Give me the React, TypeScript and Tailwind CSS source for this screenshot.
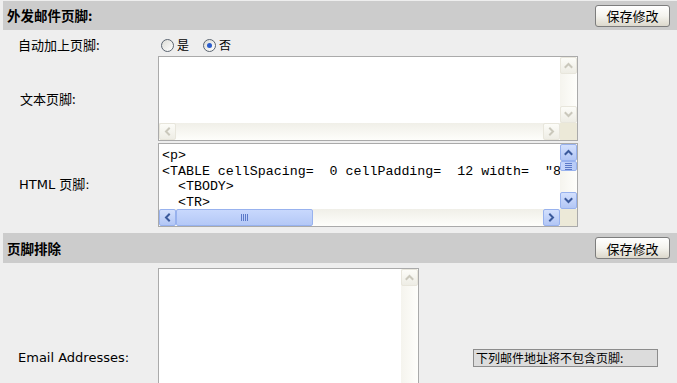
import React from "react";

type Dir = "up" | "down" | "left" | "right";

const arrowPoints: Record<Dir, string> = {
  up: "1.5,6 4.5,3 7.5,6",
  down: "1.5,3 4.5,6 7.5,3",
  left: "6,1.5 3,4.5 6,7.5",
  right: "3,1.5 6,4.5 3,7.5",
};

function Chevron({ dir, active }: { dir: Dir; active: boolean }) {
  return (
    <svg width="9" height="9" viewBox="0 0 9 9">
      <polyline
        points={arrowPoints[dir]}
        fill="none"
        stroke={active ? "#3b5a9c" : "#cac8bc"}
        strokeWidth="2"
        strokeLinecap="square"
      />
    </svg>
  );
}

function ScrollButton({ dir, active }: { dir: Dir; active: boolean }) {
  return (
    <div
      className={
        "w-[17px] h-[17px] shrink-0 flex items-center justify-center rounded-[2px] border " +
        (active
          ? "bg-gradient-to-b from-[#d3e0fd] to-[#b2c6f5] border-[#98b2ee]"
          : "bg-gradient-to-b from-[#fcfcf8] to-[#eeede5] border-[#e8e6dc]")
      }
    >
      <Chevron dir={dir} active={active} />
    </div>
  );
}

function Grip({ vertical }: { vertical: boolean }) {
  return (
    <div className={"flex gap-px " + (vertical ? "flex-col" : "flex-row")}>
      {[0, 1, 2, 3].map((i) => (
        <div
          key={i}
          className={vertical ? "w-[7px] h-px bg-[#5b79c8]" : "w-px h-[7px] bg-[#5b79c8]"}
        />
      ))}
    </div>
  );
}

function VScrollbar({ active }: { active: boolean }) {
  return (
    <div className="w-[17px] flex flex-col bg-gradient-to-r from-[#f5f4ee] to-[#fefefb]">
      <ScrollButton dir="up" active={active} />
      {active && (
        <div className="h-[10px] flex items-center justify-center rounded-[2px] border border-[#98b2ee] bg-gradient-to-r from-[#c6d6fc] to-[#b6caf6]">
          <Grip vertical />
        </div>
      )}
      <div className="flex-1" />
      <ScrollButton dir="down" active={active} />
    </div>
  );
}

function HScrollbar({ active }: { active: boolean }) {
  return (
    <div className="h-[17px] flex bg-gradient-to-b from-[#f0efe8] to-[#fefefb]">
      <ScrollButton dir="left" active={active} />
      {active && (
        <div className="w-[137px] flex items-center justify-center rounded-[2px] border border-[#98b2ee] bg-gradient-to-b from-[#c8d8fd] to-[#b4c8f6]">
          <Grip vertical={false} />
        </div>
      )}
      <div className="flex-1" />
      <ScrollButton dir="right" active={active} />
      <div className="w-[17px] bg-[#ece9d8]" />
    </div>
  );
}

function FakeTextarea({
  className,
  lines,
  hScroll = true,
  active = false,
}: {
  className: string;
  lines?: string[];
  hScroll?: boolean;
  active?: boolean;
}) {
  return (
    <div className={"shrink-0 flex flex-col border border-[#aaaaaa] bg-white " + className}>
      <div className="flex-1 flex min-h-0">
        <div className="flex-1 overflow-hidden pl-[3px] pt-[4px] font-['Liberation_Mono',monospace] text-[13.3px] leading-[15.6px] whitespace-pre">
          {lines?.map((l, i) => (
            <div key={i}>{l}</div>
          ))}
        </div>
        <VScrollbar active={active} />
      </div>
      {hScroll && <HScrollbar active={active} />}
    </div>
  );
}

function SaveButton() {
  return (
    <button className="w-[75px] h-[22px] rounded-[3px] border border-[#7d7d7d] bg-gradient-to-b from-[#ffffff] via-[#f4f3ee] to-[#dcd8cc] text-[13px] leading-none text-black">
      保存修改
    </button>
  );
}

function SectionHeader({ title, className }: { title: string; className: string }) {
  return (
    <div className={"flex items-center justify-between bg-[#cccccc] pl-1 pr-[7px] " + className}>
      <span className="font-bold text-[13.5px]">{title}</span>
      <SaveButton />
    </div>
  );
}

function Radio({ checked, label }: { checked: boolean; label: string }) {
  return (
    <label className="flex items-center gap-[3px]">
      <span className="w-[13px] h-[13px] rounded-full border border-[#5a6470] bg-gradient-to-br from-[#dcdcd6] to-white flex items-center justify-center">
        {checked && <span className="w-[5px] h-[5px] rounded-full bg-[#2a5ccc]" />}
      </span>
      <span>{label}</span>
    </label>
  );
}

const htmlLines = [
  "<p>",
  '<TABLE cellSpacing=  0 cellPadding=  12 width=  "8',
  "  <TBODY>",
  "  <TR>",
];

export default function App() {
  return (
    <div className="w-[677px] h-[383px] overflow-hidden bg-[#eeeeee] pl-[3px] pt-px font-['Noto_Sans_CJK_SC',sans-serif] text-[12px] text-black">
      <SectionHeader title="外发邮件页脚:" className="h-[29px]" />

      <div className="flex items-center h-[26px] pt-[4px]">
        <div className="w-[155px] pl-[15px] text-[13px]">自动加上页脚:</div>
        <div className="flex items-center gap-[14px] pl-[3px]">
          <Radio checked={false} label="是" />
          <Radio checked label="否" />
        </div>
      </div>

      <div className="flex items-center">
        <div className="w-[155px] pl-[17px] text-[13px]">文本页脚:</div>
        <FakeTextarea className="w-[420px] h-[85px]" />
      </div>

      <div className="flex items-center mt-[2px]">
        <div className="w-[155px] pl-[16px] text-[13px] font-['DejaVu_Sans','Noto_Sans_CJK_SC',sans-serif]">
          HTML 页脚:
        </div>
        <FakeTextarea className="w-[420px] h-[84px]" lines={htmlLines} active />
      </div>

      <SectionHeader title="页脚排除" className="h-[30px] mt-[6px]" />

      <div className="flex items-center mt-[5px]">
        <div className="w-[155px] pl-[15px] font-['DejaVu_Sans',sans-serif] text-[13px]">
          Email Addresses:
        </div>
        <FakeTextarea className="w-[261px] h-[180px]" hScroll={false} />
        <div className="ml-[54px] w-[185px] h-[18px] border border-[#8c8c8c] bg-[#dcdcdc] pl-[2px] leading-[16px]">
          下列邮件地址将不包含页脚:
        </div>
      </div>
    </div>
  );
}
